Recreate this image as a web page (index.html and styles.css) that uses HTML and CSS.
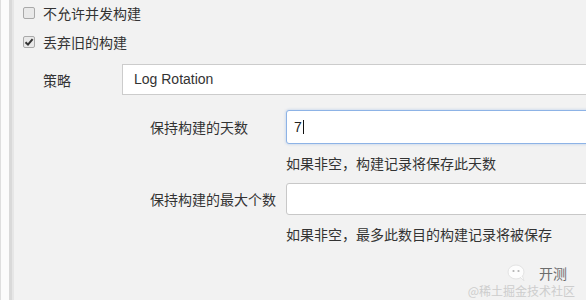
FILE: index.html
```html
<!DOCTYPE html>
<html lang="zh">
<head>
  <meta charset="UTF-8" />
  <meta name="viewport" content="width=device-width, initial-scale=1" />
  <title>丢弃旧的构建</title>
  <link rel="stylesheet" href="styles.css">
</head>
<body>
<div class="page">
  <div class="rail"><span class="rail-edge"></span><span class="rail-light"></span><span class="rail-bar"></span><span class="rail-shade"></span></div>

  <div class="content">
    <label class="check-row">
      <span class="box"></span>
      <span>不允许并发构建</span>
    </label>
    <label class="check-row">
      <span class="box">
        <svg width="10" height="10" viewBox="0 0 10 10"><path d="M1.5 5.2 L4 7.6 L8.6 2.2" fill="none" stroke="#333" stroke-width="2"/></svg>
      </span>
      <span>丢弃旧的构建</span>
    </label>

    <div class="strategy">
      <div class="strategy-label">策略</div>
      <div class="select">Log Rotation</div>
    </div>

    <div class="field field-days">
      <div class="field-label">保持构建的天数</div>
      <div class="input focused">7<span class="caret"></span></div>
    </div>
    <div class="help">如果非空，构建记录将保存此天数</div>

    <div class="field field-max">
      <div class="field-label">保持构建的最大个数</div>
      <div class="input"></div>
    </div>
    <div class="help">如果非空，最多此数目的构建记录将被保存</div>
  </div>
</div>

<div class="watermark">
  <div class="wm-brand">
    <svg width="22" height="20" viewBox="0 0 22 20"><ellipse cx="9" cy="9" rx="8" ry="7" fill="#fff" stroke="#e2e2e2"/><circle cx="6.5" cy="8" r="1.1" fill="#aaa"/><circle cx="11.5" cy="8" r="1.1" fill="#aaa"/><path d="M13 14 L17 18 L15.5 13" fill="#fff" stroke="#e2e2e2"/></svg>
    <span>开测</span>
  </div>
  <div class="wm-site">@稀土掘金技术社区</div>
</div>
</body>
</html>
```

FILE: styles.css
```css
html, body {
  margin: 0;
  height: 100%;
  overflow: hidden;
}
body {
  background: #f2f2f2;
  color: #333;
  font-family: "Liberation Sans", Arial, "Noto Sans CJK SC", sans-serif;
  font-size: 14px;
  position: relative;
}
.page {
  display: flex;
  height: 300px;
}
.rail {
  display: flex;
  flex: none;
  height: 100%;
}
.rail-edge { width: 1px; background: #dedede; }
.rail-light { width: 8px; background: #fbfbfb; }
.rail-bar { width: 3px; background: #d9d9d9; }
.rail-shade { width: 2px; background: #e6e6e6; }

.content {
  flex: 1;
  padding-left: 9px;
  min-width: 0;
}
.check-row {
  display: flex;
  align-items: center;
  height: 26px;
  gap: 8px;
}
.check-row + .check-row {
  margin-top: 3px;
}
.box {
  width: 10px;
  height: 10px;
  border: 1px solid #a9a9a9;
  border-radius: 2px;
  background: #e9e9e9;
  display: flex;
  align-items: center;
  justify-content: center;
}
.check-row span:last-child {
  font-family: "Noto Sans CJK SC", sans-serif;
}

.strategy {
  display: flex;
  align-items: center;
  margin-top: 9px;
}
.strategy-label {
  flex: none;
  width: 79px;
  padding-left: 20px;
  font-family: "Noto Sans CJK SC", sans-serif;
}
.select {
  width: 480px;
  height: 29px;
  line-height: 29px;
  background: #fff;
  border: 1px solid #ccc;
  padding-left: 11px;
  flex: none;
}

.field {
  display: flex;
  align-items: center;
  padding-left: 127px;
}
.field-days { margin-top: 15px; }
.field-max { margin-top: 10px; }
.field-label {
  flex: none;
  width: 136px;
  white-space: nowrap;
  font-family: "Noto Sans CJK SC", sans-serif;
}
.input {
  flex: none;
  width: 320px;
  height: 30px;
  line-height: 30px;
  background: #fff;
  border: 1px solid #c8c8c8;
  border-radius: 3px;
  padding-left: 7px;
  box-sizing: content-box;
}
.focused {
  height: 32px;
  line-height: 32px;
  border-color: #8db3e6;
  box-shadow: 0 0 3px rgba(102, 152, 220, 0.45);
  color: #222;
}
.caret {
  display: inline-block;
  width: 1px;
  height: 14px;
  background: #111;
  margin-left: 1px;
  vertical-align: -2px;
}
.help {
  padding-left: 263px;
  height: 20px;
  line-height: 20px;
  margin-top: 9px;
  font-family: "Noto Sans CJK SC", sans-serif;
  white-space: nowrap;
}

.watermark {
  position: absolute;
  right: 11px;
  bottom: 1px;
  text-align: right;
  font-family: "Noto Sans CJK SC", sans-serif;
}
.wm-brand {
  display: flex;
  justify-content: flex-end;
  align-items: center;
  gap: 10px;
  margin-right: 8px;
  color: #555;
  font-size: 14px;
  line-height: 16px;
  opacity: 0.85;
}
.wm-site {
  color: #cdcdcd;
  font-size: 12px;
  line-height: 16px;
}
```
